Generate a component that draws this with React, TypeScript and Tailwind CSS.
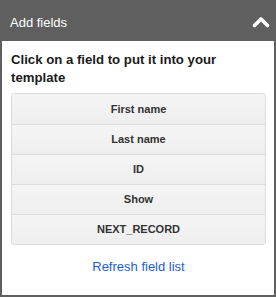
import React from 'react';

const fields = ['First name', 'Last name', 'ID', 'Show', 'NEXT_RECORD'];

// Chunky up-chevron used for collapsing the panel
const ChevronUp = () => (
    <svg width="18" height="12" viewBox="0 0 18 12" fill="none" aria-hidden="true">
        <path d="M2.5 9.5 9 3l6.5 6.5" stroke="#ffffff" strokeWidth="3.6" strokeLinecap="round" strokeLinejoin="round" />
    </svg>
);

export default function App() {
    return (
        <div className="w-[276px] h-[297px] bg-white border-2 border-[#5f5f5f] flex flex-col font-['Liberation_Sans',Arial,sans-serif] antialiased">
            {/* Panel header */}
            <header className="h-[39px] shrink-0 bg-[#5f5f5f] flex items-center justify-between pl-[8px] pr-[4px]">
                <span className="text-white text-[13px] leading-[18px] pt-[2px]">Add fields</span>
                <ChevronUp />
            </header>

            <div className="flex flex-col pl-[9px] pr-[8px] pt-[10px]">
                <p className="text-[13.2px] leading-[18px] font-bold text-[#1b1b1b]">
                    Click on a field to put it into your template
                </p>

                <ul className="mt-[6px] rounded-[3px] border border-[#dcdcdc] overflow-hidden">
                    {fields.map((name, i) => (
                        <li
                            key={name}
                            className={`h-[30px] flex items-center justify-center bg-gradient-to-b from-[#f5f5f5] to-[#eeeeee] text-[11px] font-bold text-[#333333] ${
                                i > 0 ? 'border-t border-[#dcdcdc]' : ''
                            }`}
                        >
                            {name}
                        </li>
                    ))}
                </ul>

                <div className="mt-[9px] text-center">
                    <a href="#" className="text-[13px] leading-[18px] text-[#1a5dd6]">
                        Refresh field list
                    </a>
                </div>
            </div>
        </div>
    );
}
